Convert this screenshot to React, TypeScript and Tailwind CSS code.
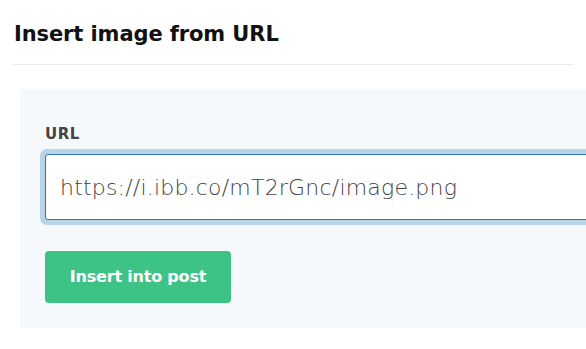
import React from "react";

function App() {
  return (
    <div className="w-[586px] h-[349px] overflow-hidden bg-white font-['DejaVu_Sans',sans-serif]">
      <div className="mx-3 h-[65px] border-b border-[#ececec] flex items-center">
        <h1 className="px-0.5 pt-[5px] text-[21px] font-bold text-[#111] tracking-[-0.1px]">
          Insert image from URL
        </h1>
      </div>
      <div className="ml-5 mt-6 w-[620px] h-[239px] bg-[#f5f9fc] pl-[25px] pt-[36px]">
        <label className="block text-[15px] font-semibold text-[#444] tracking-[0.5px] leading-[18px]">
          URL
        </label>
        <div className="mt-[6px] -ml-[5px] w-[600px] rounded-[7px] bg-[#b8d4e8] p-[5px]">
          <input
            className="block w-full h-[66px] rounded-[3px] border border-[#2f73b5] bg-white px-[14px] text-[22px] font-light text-[#444] tracking-[0.2px] outline-none"
            defaultValue="https://i.ibb.co/mT2rGnc/image.png"
          />
        </div>
        <button className="mt-[26px] w-[186px] h-[52px] rounded-[4px] bg-[#3ec387] text-white text-[16px] font-semibold tracking-[-0.2px]">
          Insert into post
        </button>
      </div>
    </div>
  );
}

export default App;
